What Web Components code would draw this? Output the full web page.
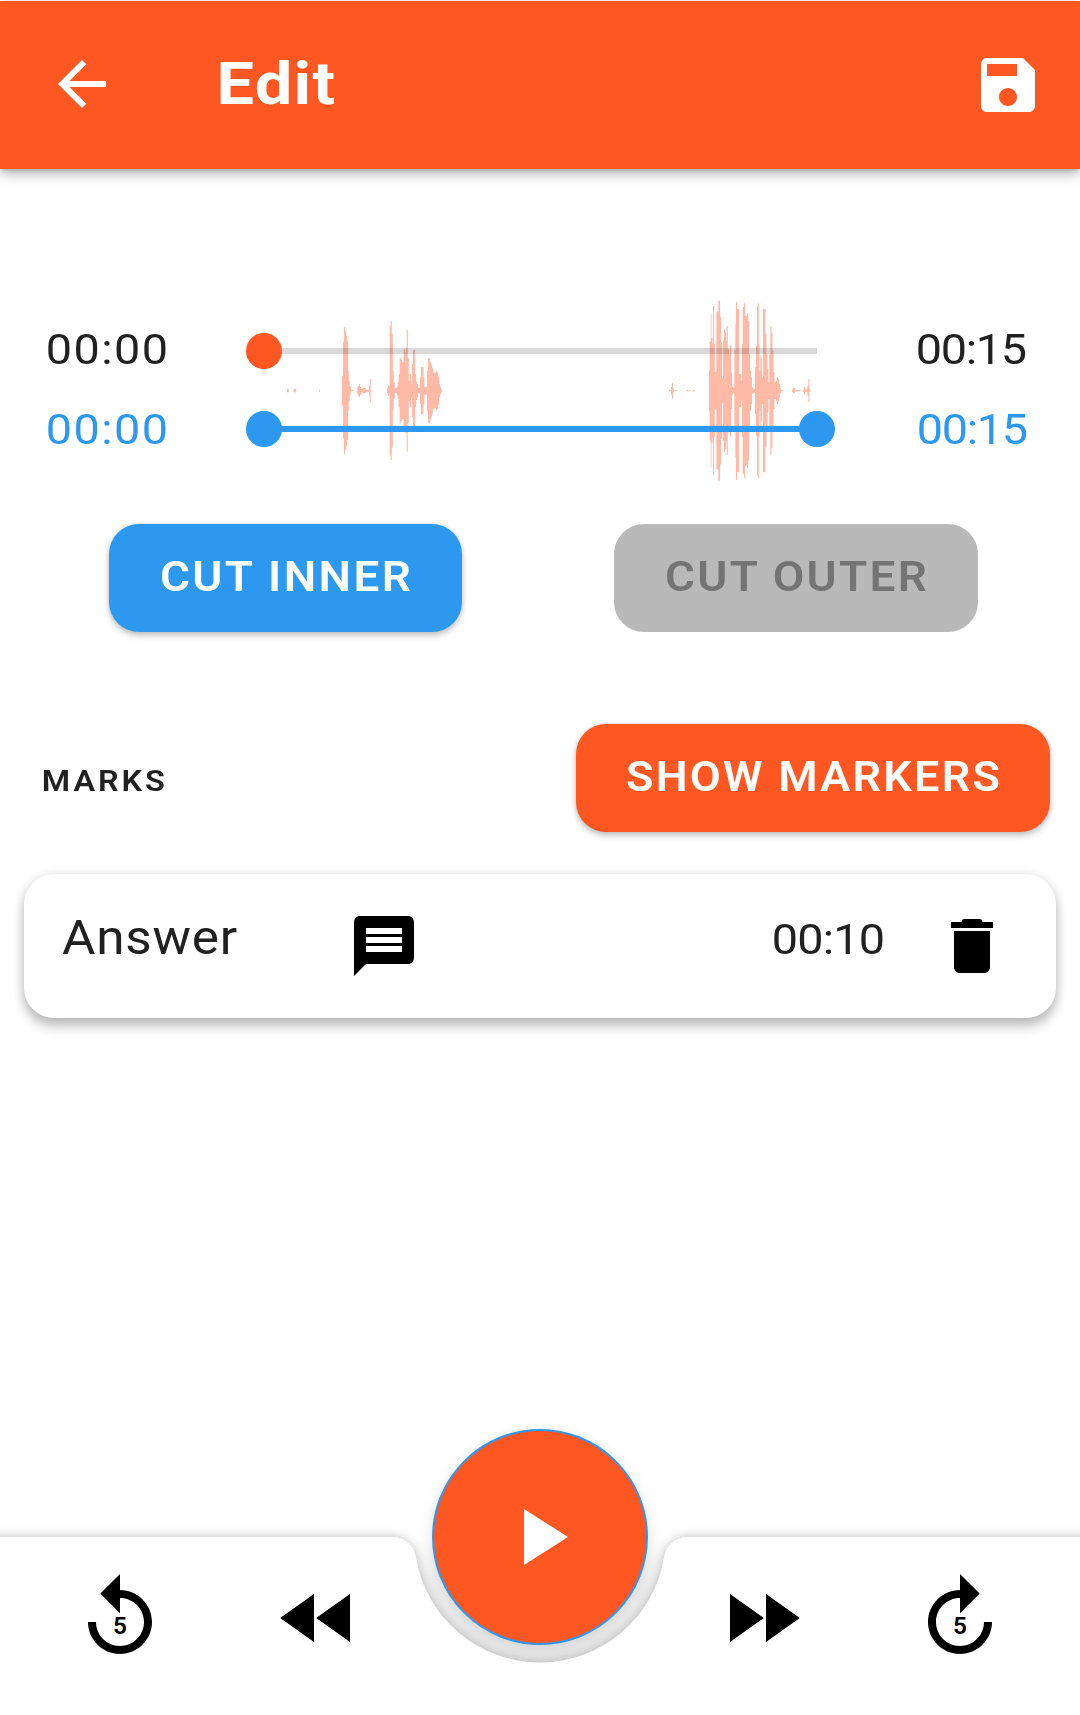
<!DOCTYPE html>
<html lang="en">
<head>
<meta charset="utf-8">
<title>Edit</title>
<style>
html,body{margin:0;background:#fff}
body{font-family:Roboto,"Liberation Sans",sans-serif;color:#212121}
</style>
</head>
<body>
<edit-screen></edit-screen>
<script>
const define=(name,html,init)=>customElements.define(name,class extends HTMLElement{
  constructor(){super();this.attachShadow({mode:'open'}).innerHTML=html;}
  connectedCallback(){if(init)init.call(this,this.shadowRoot);}
});

// Single-line label, widened by "stretch" and tracked out so that its glyphs span the given width.
define('fit-label','<style>:host{display:block;flex:none;white-space:nowrap;line-height:1}span{display:block;width:max-content;transform-origin:0 0}</style><span></span>',function(root){
  const text=this.getAttribute('text'),w=+this.getAttribute('w'),size=+this.getAttribute('size'),weight=this.getAttribute('weight')||400,k=+(this.getAttribute('stretch')||1.08);
  const c=document.createElement('canvas').getContext('2d');
  c.font=`${weight} ${size}px Roboto, "Liberation Sans", sans-serif`;
  const m=c.measureText(text);
  const ls=(w/k-m.actualBoundingBoxLeft-m.actualBoundingBoxRight)/(text.length-1);
  Object.assign(this.style,{width:w+'px',height:size+'px',fontSize:size+'px',fontWeight:weight,letterSpacing:ls+'px',textIndent:m.actualBoundingBoxLeft+'px'});
  const span=root.querySelector('span');
  span.style.transform=`scaleX(${k})`;
  span.textContent=text;
});

const icons={
  back:'<path d="M20 11H7.83l5.59-5.59L12 4l-8 8 8 8 1.41-1.41L7.83 13H20v-2z"/>',
  save:'<path d="M17 3H5c-1.11 0-2 .9-2 2v14c0 1.1.89 2 2 2h14c1.1 0 2-.9 2-2V7l-4-4zm-5 16c-1.66 0-3-1.34-3-3s1.34-3 3-3 3 1.34 3 3-1.34 3-3 3zm3-10H5V5h10v4z"/>',
  message:'<path d="M20 2H4c-1.1 0-2 .9-2 2v18l4-4h14c1.1 0 2-.9 2-2V4c0-1.1-.9-2-2-2zM18 14H6v-2h12v2zm0-3H6V9h12v2zm0-3H6V6h12v2z" transform="matrix(.966 0 0 1 .07 0)"/>',
  trash:'<path d="M6 19c0 1.1.9 2 2 2h8c1.1 0 2-.9 2-2V7H6v12zM19 4h-3.5c0-.6-.4-1-1-1h-5c-.6 0-1 .4-1 1H5v2h14V4z"/>',
  replay:'<path d="M12 5V1L7.1 5.9l4.9 4.9V7c3.3 0 6 2.7 6 6s-2.7 6-6 6-6-2.7-6-6H4c0 4.4 3.6 8 8 8s8-3.6 8-8-3.6-8-8-8z"/><text x="12" y="16.05" text-anchor="middle" font-size="6.1" font-weight="600">5</text>',
  forward:'<path d="M12 5V1l4.9 4.9-4.9 4.9V7c-3.3 0-6 2.7-6 6s2.7 6 6 6 6-2.7 6-6h2c0 4.4-3.6 8-8 8s-8-3.6-8-8 3.6-8 8-8z"/><text x="12" y="16.05" text-anchor="middle" font-size="6.1" font-weight="600">5</text>',
  rewind:'<path d="M11.5 6v12L3.05 12zM20.5 6v12L12.05 12z"/>',
  fast:'<path d="M3.5 6v12l8.45-6zM12.5 6v12l8.45-6z"/>',
  play:'<path d="M8 5v14l11-7z"/>'
};
icons.message=icons.message.replace(/ transform="[^"]*"/,'');
define('ui-icon','<style>:host{display:block;flex:none}svg{display:block;width:100%;height:100%;fill:currentColor}text{font-family:Roboto,"Liberation Sans",sans-serif}</style><svg viewBox="0 0 24 24"></svg>',function(root){
  const s=this.getAttribute('size')+'px';
  this.style.width=s;this.style.height=s;
  root.querySelector('svg').innerHTML=icons[this.getAttribute('name')];
});

define('app-bar',`<style>
:host{display:block;padding-top:1px}
header{height:168px;box-sizing:border-box;background:#ff5722;color:#fff;display:flex;padding:47px 36px 0 46px;box-shadow:0 5px 12px rgba(0,0,0,.27),0 2px 4px rgba(0,0,0,.12)}
fit-label{margin:6px auto 0 102px}
.save{margin-top:1px}
</style><header><ui-icon name="back" size="72"></ui-icon><fit-label text="Edit" w="114" size="59" weight="700" stretch="1.13"></fit-label><ui-icon class="save" name="save" size="72"></ui-icon></header>`);

define('raised-button',`<style>
:host{display:block;flex:none}
button{font:inherit;border:0;margin:0;width:100%;height:108px;border-radius:30px;display:flex;align-items:flex-start;padding:32px 0 0 51.5px;background:var(--fill);color:var(--ink,#fff);box-shadow:var(--lift,0 4px 6px rgba(0,0,0,.2),0 0 5px rgba(0,0,0,.12))}
</style><button><slot></slot></button>`);

define('range-track',`<style>
:host{display:flex;align-items:center;height:36px;color:var(--tone)}
i{flex:none;width:36px;height:36px;border-radius:50%;background:currentColor;z-index:1}
b{flex:1;height:6px;background:var(--rail)}
:host([dual]) b{margin:0 -4px}
:host(:not([dual])) i:last-child{visibility:hidden;margin-left:-18px}
:host(:not([dual])) b{margin-left:-1px}
</style><i></i><b></b><i></i>`);

// Amplitude runs: start, end and half height, in thirds of a pixel.
const left=`171 176 5,191 198 5,267 270 3,336 339 45,339 342 145,342 345 190,345 348 178,348 351 165,351 354 148,354 356 60,356 359 30,359 362 14,362 371 2,382 384 10,384 387 15,387 390 20,390 393 12,393 398 5,398 408 8,408 417 3,417 419 15,419.5 422 35,471 474 8,474 479 15,479 482 195,482 485 208,485 488 170,488 491 60,491 494 25,494 500 7,500 503 12,503 506 25,506 509 50,509 512 98,512 515 92,515 521 85,521 524 125,524 527 115,527 530 128,530 533 183,533 536 98,536 539 30,539 543 50,543 546 20,546 549 80,549 555 122,555 558 50,558 561 28,561 564 20,564 570 8,570 573 40,573 580 71,580 583 42,583 591 12,591 594 60,594 600 97,600 603 85,603 606 78,606 609 68,609 612 55,612 618 53,618 621 58,621 624 55,624 627 42,627 630 20,630 633 10,633 636 3`;
const right=`57 63 2,63 66 12,66 69 24,69 72 5,75 80 2,110 116 2,120 123 2,129 134 2,177 179 62,179 182 148,182 184 230,184 187 158,187 189 142,189 192 254,192 194 140,194 199 57,199 202 235,202 205 238,205 210 270,210 213 222,213 216 145,216 219 38,219 222 150,222 225 185,225 228 175,228 231 150,230 233 194,233 237 125,237 240 110,240 243 138,243 246 55,246 249 12,249 253 8,253 256 120,256 259 200,258 261 267,261 267 245,267 273 50,273 276 30,276 279 140,278 282 250,282 285 262,285 291 225,291 294 232,294 297 210,297 300 110,300 303 60,303 306 40,306 309 10,309 315 6,315 318 70,318 321 135,321 324 255,324 326 263,326 328 140,328 331 60,331 334 105,334 336 95,336 339 40,339 346 245,346 349 170,349 352 110,352 355 65,355 358 25,358 361 110,361 364 194,364 367 172,367 370 120,370 373 55,373 378 25,378 381 30,381 384 40,384 387 35,387 390 20,390 393 8,393 399 2,426 429 5,429 434 8,434 452 2,458 462 3,462 465 12,465 472 4,472 475 15,475 478 35,478 481 4`;
define('wave-form',`<style>:host{display:block;pointer-events:none}svg{display:block}</style><svg width="620" height="200" viewBox="0 0 620 200"><path fill="#ffbaa7"/></svg>`,function(root){
  const run=(s,dx)=>s.split(',').map(r=>{const [a,b,h]=r.split(' ').map(Number);return `M${(a/3+dx).toFixed(2)} ${(100.7-h/3).toFixed(2)}h${((b-a)/3+.12).toFixed(2)}v${(h*2/3).toFixed(2)}h${((a-b)/3-.12).toFixed(2)}z`}).join('');
  root.querySelector('path').setAttribute('d',run(left,0)+run(right,420));
});

define('trim-panel',`<style>
:host{display:flex;position:relative;padding:160px 53px 0 48px;height:113px;align-items:flex-start}
.times{display:flex;flex-direction:column;gap:37.5px;position:relative}
.alt{color:#2d98f0}
.tracks{flex:1;display:flex;flex-direction:column;gap:42px;margin:4px 83px 0 80px;position:relative}
.play{--tone:#ff5722;--rail:rgba(0,0,0,.145)}
.trim{--tone:#2d98f0;--rail:#2d98f0}
wave-form{position:absolute;left:230px;top:121px}
</style>
<wave-form></wave-form>
<div class="times"><fit-label text="00:00" w="118" size="42.5" stretch="1.1"></fit-label><fit-label class="alt" text="00:00" w="118" size="42.5" stretch="1.1"></fit-label></div>
<div class="tracks"><range-track class="play"></range-track><range-track class="trim" dual></range-track></div>
<div class="times"><fit-label text="00:15" w="108" size="42.5" stretch="1.1"></fit-label><fit-label class="alt" style="margin-left:1px" text="00:15" w="108" size="42.5" stretch="1.1"></fit-label></div>`);

define('mark-card',`<style>
:host{display:flex;align-items:flex-start;margin:42px 24px 0;height:144px;border-radius:30px;background:#fff;box-sizing:border-box;padding:36px 48px 0 38px;box-shadow:0 9px 12px rgba(0,0,0,.2),0 2px 12px rgba(0,0,0,.15)}
</style>
<fit-label style="margin-top:4.5px" text="Answer" w="175" size="47.5"></fit-label>
<ui-icon style="margin:0 auto 0 111px;color:#000" name="message" size="72"></ui-icon>
<fit-label style="margin:9px 53px 0 0" text="00:10" w="109" size="42.5" stretch="1.1"></fit-label>
<ui-icon style="color:#000" name="trash" size="72"></ui-icon>`);

define('player-bar',`<style>
:host{display:block;position:relative;height:315px;color:#000;overflow:hidden}
.sheet{position:absolute;inset:0}
.row{position:relative;display:flex;justify-content:space-between;padding:170px 72px 0}
.pair{display:flex;gap:100px}
.fab{position:absolute;left:432px;top:29px;width:216px;height:216px;box-sizing:border-box;border-radius:50%;border:2px solid #2d98f0;background:#ff5722;color:#fff;display:flex;align-items:center;justify-content:center;box-shadow:0 6px 18px rgba(0,0,0,.09),0 0 10px rgba(0,0,0,.04)}
</style>
<svg class="sheet" width="1080" height="315" viewBox="0 0 1080 315">
<defs><filter id="s" filterUnits="userSpaceOnUse" x="-40" y="0" width="1160" height="360"><feDropShadow dx="0" dy="0" stdDeviation="5.5" flood-color="#000" flood-opacity=".26"/></filter>
<linearGradient id="g" x1="0" y1="0" x2="0" y2="1"><stop offset="0" stop-opacity="0"/><stop offset=".35" stop-opacity=".06"/><stop offset="1" stop-opacity=".08"/></linearGradient></defs>
<path fill="url(#g)" d="M414 137H666V157A126 126 0 0 1 414 157z"/>
<path filter="url(#s)" fill="#fff" d="M-30 137H393A24 24 0 0 1 415.7 157.3A126 126 0 0 0 664.3 157.3A24 24 0 0 1 687 137H1110V345H-30z"/>
</svg>
<div class="row">
<div class="pair"><ui-icon name="replay" size="96"></ui-icon><ui-icon name="rewind" size="96"></ui-icon></div>
<div class="pair"><ui-icon name="fast" size="96"></ui-icon><ui-icon name="forward" size="96"></ui-icon></div>
</div>
<div class="fab"><ui-icon name="play" size="96"></ui-icon></div>`);

define('edit-screen',`<style>
:host{display:flex;flex-direction:column;height:1715px;width:1080px;overflow:hidden;background:#fff}
.cuts{display:flex;justify-content:space-between;padding:82px 102px 0 109px}
.marks{display:flex;justify-content:space-between;align-items:flex-start;padding:92px 30px 0 43.7px}
player-bar{margin-top:auto}
</style>
<app-bar></app-bar>
<trim-panel></trim-panel>
<div class="cuts">
<raised-button style="width:353px;--fill:#2d98f0"><fit-label text="CUT INNER" w="251" size="42.5" weight="600"></fit-label></raised-button>
<raised-button style="width:364px;--fill:#b9b9b9;--ink:#747474;--lift:none"><fit-label text="CUT OUTER" w="262" size="42.5" weight="600"></fit-label></raised-button>
</div>
<div class="marks"><fit-label style="margin-top:41.5px" text="MARKS" w="120.5" size="30" weight="600"></fit-label>
<raised-button style="width:474px;--fill:#ff5722"><fit-label style="margin-left:-1px" text="SHOW MARKERS" w="372" size="42.5" weight="600" stretch="1.06"></fit-label></raised-button></div>
<mark-card></mark-card>
<player-bar></player-bar>`);
</script>
</body>
</html>
